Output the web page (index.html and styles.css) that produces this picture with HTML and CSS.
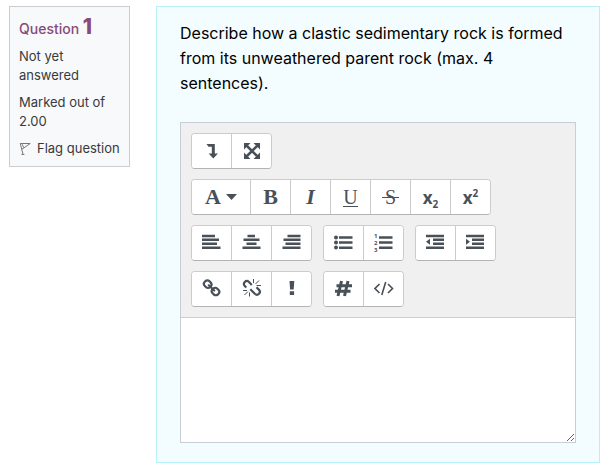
FILE: index.html
```html
<!DOCTYPE html>
<html lang="en">
<head>
    <meta charset="UTF-8">
    <meta name="viewport" content="width=device-width, initial-scale=1.0">
    <title>Question 1</title>
    <link rel="stylesheet" href="styles.css">
</head>
<body>

    <div class="question">
        <aside class="info">
            <h3 class="info-title">Question <span class="info-number">1</span></h3>
            <div class="info-state">Not yet answered</div>
            <div class="info-grade">Marked out of 2.00</div>
            <a class="info-flag" href="#">
                <svg class="flag-icon" viewBox="0 0 12 13" fill="none" stroke="#777" aria-hidden="true">
                    <path d="M1.2 1.2 4 12.3M2.4 12.4h3" />
                    <path d="M1.3 1.5h9.9L3 7.2M3.2 2.2l1.5 3.6" />
                </svg>
                <span>Flag question</span>
            </a>
        </aside>

        <main class="content">
            <label class="question-text" for="answer">Describe how a clastic sedimentary rock is formed from its unweathered parent rock (max. 4 sentences).</label>

            <div class="editor">
                <div class="toolbar" role="toolbar" aria-label="Editor toolbar">
                    <div class="toolbar-row">
                        <div class="group">
                            <button type="button" class="btn" aria-label="Show more buttons">
                                <svg class="icon" viewBox="0 0 20 20"><path d="M4.5 3h8.3v9.5H16l-4.700 5-4.700-5h3.200V5.800H6.500z" /></svg>
                            </button>
                            <button type="button" class="btn" aria-label="Toggle full screen">
                                <svg class="icon" viewBox="0 0 20 20">
                                    <path d="M2 2h6.500L2 8.500zM18 2v6.500L11.500 2zM2 18v-6.500L8.500 18zM18 18h-6.500l6.500-6.500z" />
                                    <path d="M4 4l12 12M16 4L4 16" fill="none" stroke="currentColor" stroke-width="2.6" />
                                </svg>
                            </button>
                        </div>
                    </div>

                    <div class="toolbar-row">
                        <div class="group">
                            <button type="button" class="btn btn-wide serif" aria-label="Paragraph styles">A
                                <svg class="caret" viewBox="0 0 11 6"><path d="M0 0h11L5.5 6z" /></svg>
                            </button>
                            <button type="button" class="btn serif" aria-label="Bold">B</button>
                            <button type="button" class="btn serif italic" aria-label="Italic">I</button>
                            <button type="button" class="btn serif" aria-label="Underline"><span class="underline">U</span></button>
                            <button type="button" class="btn serif" aria-label="Strike through"><span class="strike">S</span></button>
                            <button type="button" class="btn script" aria-label="Subscript"><span>x<sub>2</sub></span></button>
                            <button type="button" class="btn script" aria-label="Superscript"><span>x<sup>2</sup></span></button>
                        </div>
                    </div>

                    <div class="toolbar-row">
                        <div class="group">
                            <button type="button" class="btn" aria-label="Left align">
                                <svg class="icon" viewBox="0 0 20 20"><path d="M0 1.700h13v2.500H0zM0 5.600h17v2.500H0zM0 9.500h15V12H0zM0 13.400h18.500v2.500H0z" /></svg>
                            </button>
                            <button type="button" class="btn" aria-label="Center">
                                <svg class="icon" viewBox="0 0 20 20"><path d="M5.500 1.700h7.500v2.500H5.500zM1.500 5.600h16v2.500h-16zM4.500 9.500h10V12h-10zM.5 13.400h18v2.500H.5z" /></svg>
                            </button>
                            <button type="button" class="btn" aria-label="Right align">
                                <svg class="icon" viewBox="0 0 20 20"><path d="M5.500 1.700h13v2.500h-13zM1.500 5.600h17v2.500h-17zM3.500 9.500h15V12h-15zM.5 13.400h18v2.500H.5z" /></svg>
                            </button>
                        </div>
                        <div class="group">
                            <button type="button" class="btn" aria-label="Unordered list">
                                <svg class="icon" viewBox="0 0 20 20">
                                    <circle cx="2" cy="4.400" r="2" /><circle cx="2" cy="9.500" r="2" /><circle cx="2" cy="14.600" r="2" />
                                    <path d="M5 3.200h13.500v2.500H5zM5 8.300h13.500v2.500H5zM5 13.400h13.500v2.500H5z" />
                                </svg>
                            </button>
                            <button type="button" class="btn" aria-label="Ordered list">
                                <svg class="icon" viewBox="0 0 20 20">
                                    <text class="list-digit" x="0" y="5">1</text>
                                    <text class="list-digit" x="0" y="12">2</text>
                                    <text class="list-digit" x="0" y="19">3</text>
                                    <path d="M5 3.200h13.500v2.500H5zM5 8.300h13.500v2.500H5zM5 13.400h13.500v2.500H5z" />
                                </svg>
                            </button>
                        </div>
                        <div class="group">
                            <button type="button" class="btn" aria-label="Outdent">
                                <svg class="icon" viewBox="0 0 20 20"><path d="M0 1.700h18v2.500H0zM7 5.600h11v2.500H7zM7 9.500h11V12H7zM0 13.400h18v2.500H0zM4 5.800v6L0 8.800z" /></svg>
                            </button>
                            <button type="button" class="btn" aria-label="Indent">
                                <svg class="icon" viewBox="0 0 20 20"><path d="M0 1.700h18v2.500H0zM6 5.600h12v2.500H6zM6 9.500h12V12H6zM0 13.400h18v2.500H0zM0 5.800v6l4-3z" /></svg>
                            </button>
                        </div>
                    </div>

                    <div class="toolbar-row">
                        <div class="group">
                            <button type="button" class="btn" aria-label="Link">
                                <svg class="icon" viewBox="0 0 20 20">
                                    <g fill="none" stroke="currentColor" stroke-width="2.200" stroke-linecap="round">
                                        <rect x="-3.500" y="-3.300" width="7.500" height="6.600" rx="3" transform="translate(5.500 5) rotate(45)" />
                                        <rect x="-4" y="-3.300" width="7.500" height="6.600" rx="3" transform="translate(13.700 12.700) rotate(45)" />
                                        <path d="M6.800 6.300l5.400 5.200" />
                                    </g>
                                </svg>
                            </button>
                            <button type="button" class="btn" aria-label="Unlink">
                                <svg class="icon" viewBox="0 0 20 20">
                                    <g fill="none" stroke="currentColor" stroke-width="2.200">
                                        <path d="M4.300 8.500 3 7.200C1.500 5.700 1.500 4.400 2.800 3s2.800-1.300 4.200 0l2.800 2.900" />
                                        <path d="M14.500 8.300l2.300 2.300c1.500 1.500 1.500 2.900.2 4.200s-2.800 1.300-4.200 0L8.300 10.300" />
                                    </g>
                                    <path d="M11.500 0v4M13.500 5 17 1.500M14.500 6.500H19M1 11.500h4M6 12.500 2.500 16M7.500 13.500v4" fill="none" stroke="currentColor" />
                                </svg>
                            </button>
                            <button type="button" class="btn" aria-label="Prevent automatic linking">
                                <svg class="icon" viewBox="0 0 20 20"><path d="M7.500 2h4.800l-.6 8.500H8.100zM7.800 12.200h4.300V16H7.800z" /></svg>
                            </button>
                        </div>
                        <div class="group">
                            <button type="button" class="btn" aria-label="Insert character">
                                <svg class="icon" viewBox="0 0 20 20"><path d="M7.500 2 4 17M14 2l-3.500 15M2.500 6.800H18M1 12.200h15.500" fill="none" stroke="currentColor" stroke-width="3" /></svg>
                            </button>
                            <button type="button" class="btn" aria-label="HTML">
                                <svg class="icon" viewBox="0 0 20 20"><path d="M5.500 5 1 9.500 5.500 14M14 5l4.500 4.500L14 14M11.700 3 7.800 16" fill="none" stroke="currentColor" stroke-width="1.600" /></svg>
                            </button>
                        </div>
                    </div>
                </div>

                <textarea id="answer" class="answer" name="answer"></textarea>
            </div>
        </main>
    </div>

</body>
</html>
```

FILE: styles.css
```css
* {
    box-sizing: border-box;
}

body {
    margin: 0;
    padding: 6px 5px 5px 9px;
    background-color: #fff;
    color: #373a3c;
    font-family: Inter, "Liberation Sans", sans-serif;
}

.question {
    display: grid;
    grid-template-columns: 121px 1fr;
    gap: 26px;
    align-items: start;
}

/* Question status box */
.info {
    padding: 8px 9px;
    background-color: #f8f9fa;
    border: 1px solid #caced3;
    font-size: 13px;
    line-height: 19px;
}

.info-title {
    margin: 0 0 6px;
    color: #874a7b;
    font-size: 14px;
    font-weight: 500;
    line-height: 24px;
}

.info-number {
    font-size: 21px;
    font-weight: 800;
}

.info-state,
.info-grade {
    margin-bottom: 8px;
}

.info-flag {
    display: flex;
    align-items: center;
    gap: 6px;
    color: inherit;
    text-decoration: none;
    white-space: nowrap;
}

.flag-icon {
    width: 12px;
    height: 13px;
}

/* Question body */
.content {
    padding: 14px 23px 19px;
    background-color: #f3fcff;
    border: 1px solid #b8f0fa;
}

.question-text {
    display: block;
    margin-bottom: 26px;
    color: #000;
    font-size: 16px;
    line-height: 25px;
}

.editor {
    border: 1px solid #c8ced8;
    background-color: #fff;
}

.toolbar {
    display: flex;
    flex-direction: column;
    gap: 10px;
    padding: 10px;
    background-color: #f0f0f0;
    border-bottom: 1px solid #c8ced8;
}

.toolbar-row {
    display: flex;
    gap: 11px;
}

.group {
    display: flex;
    border: 1px solid #ccc;
    border-bottom-color: #b3b3b3;
    border-radius: 4px;
    background-color: #fff;
    overflow: hidden;
}

.btn {
    display: flex;
    align-items: center;
    justify-content: center;
    width: 40px;
    height: 34px;
    padding: 0;
    border: 0;
    border-right: 1px solid #ccc;
    background-color: #fff;
    color: #495057;
    cursor: pointer;
}

.btn:last-child {
    width: 39px;
    border-right: 0;
}

.btn:hover {
    background-color: #f0f0f0;
}

.btn-wide {
    width: 59px;
    gap: 5px;
}

.icon {
    width: 20px;
    height: 20px;
    fill: currentColor;
}

.caret {
    width: 11px;
    height: 6px;
    fill: currentColor;
}

.serif {
    font-family: "Liberation Serif", serif;
    font-size: 22px;
    font-weight: 700;
}

.italic {
    font-style: italic;
}

.underline,
.strike {
    font-size: 20px;
    font-weight: 400;
    line-height: 18px;
}

.underline {
    border-bottom: 1px solid #495057;
}

.strike {
    padding: 0 3px;
    background: linear-gradient(#495057, #495057) center / 100% 1px no-repeat;
}

.script {
    font-family: "Open Sans", sans-serif;
    font-size: 17px;
    font-weight: 700;
}

.script sub,
.script sup {
    font-size: 10px;
    line-height: 0;
}

.list-digit {
    font-family: "Open Sans", sans-serif;
    font-size: 6px;
    font-weight: 700;
}

.answer {
    display: block;
    width: 100%;
    height: 124px;
    padding: 6px;
    border: 0;
    outline: none;
    resize: vertical;
    font-family: inherit;
    font-size: 16px;
}
```
